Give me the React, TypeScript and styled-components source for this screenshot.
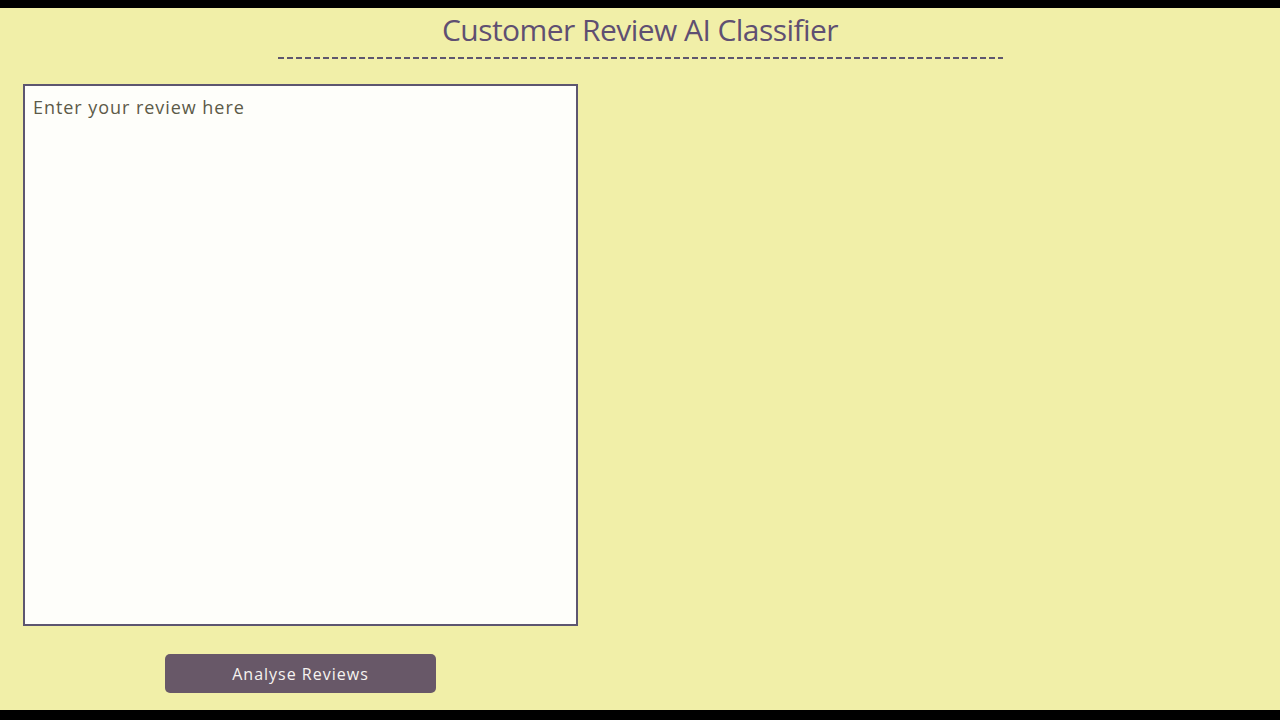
import React from "react";
import styled, { createGlobalStyle } from "styled-components";

const GlobalStyle = createGlobalStyle`
  html, body { margin: 0; padding: 0; }
  body { background: #000; font-family: "Open Sans", "Noto Sans", sans-serif; }
  * { box-sizing: border-box; }
`;

const Page = styled.div`
  height: 720px;
  display: flex;
  flex-direction: column;
  border-top: 8px solid #000;
  border-bottom: 10px solid #000;
  background: #f1efa8;
  overflow: hidden;
`;

const Header = styled.header`
  display: flex;
  flex-direction: column;
  align-items: center;
  padding-top: 2px;
`;

const Title = styled.h1`
  margin: 0;
  font-family: "Open Sans", sans-serif;
  font-weight: 400;
  font-size: 30px;
  line-height: 40px;
  letter-spacing: -0.55px;
  color: #5f4f72;
`;

const DashedRule = styled.div`
  width: 725px;
  height: 2px;
  margin-top: 7px;
  background: repeating-linear-gradient(
    to right,
    #5e566e 0 6px,
    transparent 6px 9px
  );
`;

const Main = styled.main`
  display: flex;
  flex-direction: column;
  align-items: center;
  width: 555px;
  margin: 25px 0 0 23px;
  gap: 28px;
`;

const ReviewInput = styled.textarea`
  width: 555px;
  height: 542px;
  border: 2px solid #5d5670;
  background: #fefefa;
  padding: 9px 8px 8px;
  font-family: "Open Sans", sans-serif;
  font-size: 18px;
  letter-spacing: 0.95px;
  color: #333;
  resize: none;
  outline: none;
  &::placeholder {
    color: #5c5a48;
    opacity: 1;
  }
`;

const AnalyseButton = styled.button`
  width: 271px;
  height: 39px;
  border: none;
  border-radius: 5px;
  background: #685868;
  color: #f6f3f0;
  font-family: "Open Sans", sans-serif;
  font-size: 16px;
  letter-spacing: 1px;
  cursor: pointer;
`;

export default function App() {
  return (
    <>
      <GlobalStyle />
      <Page>
        <Header>
          <Title>Customer Review AI Classifier</Title>
          <DashedRule />
        </Header>
        <Main>
          <ReviewInput placeholder="Enter your review here" />
          <AnalyseButton>Analyse Reviews</AnalyseButton>
        </Main>
      </Page>
    </>
  );
}
